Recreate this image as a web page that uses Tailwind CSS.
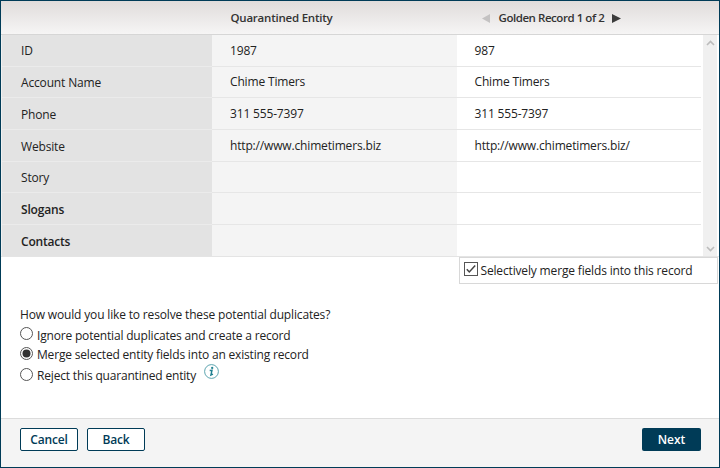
<!DOCTYPE html>
<html lang="en">
<head>
<meta charset="utf-8">
<title>Resolve duplicates</title>
<script src="https://cdn.jsdelivr.net/npm/@tailwindcss/browser@4"></script>
</head>
<body class="w-[720px] h-[468px] overflow-hidden bg-[#003b57] pt-px pl-px pr-px pb-px font-['Open_Sans',sans-serif] text-[12px] leading-4 tracking-[-0.16px] text-[#222]">
<div class="flex h-[466px] w-[718px] flex-col bg-white">
  <header class="flex h-[34px] shrink-0 border-b border-[#d6d6d6] bg-linear-to-b from-[#e0dcdb] to-[#f6f5f5] text-[11.5px] font-semibold tracking-[-0.22px] text-[#333]">
    <div class="ml-[229.5px] w-[250px] pt-[9px]">Quarantined Entity</div>
    <div class="flex pt-[9px]">
      <svg class="mt-1 mr-[9px] ml-px h-[9px] w-[8px]" viewBox="0 0 8 9"><path d="M8 0V9L0 4.5Z" fill="#c4c2c2"/></svg>
      <span class="w-[105px] whitespace-nowrap tracking-[-0.45px]">Golden Record 1 of 2</span>
      <svg class="mt-1 ml-[8px] h-[9px] w-[9px]" viewBox="0 0 9 9"><path d="M0 0V9L9 4.5Z" fill="#3c3c3c"/></svg>
    </div>
  </header>

  <section class="flex h-[222px] shrink-0 border-b border-[#e4e4e4]">
    <div class="grid w-[211px] grid-rows-[32px_31px_32px_32px_31px_32px_31px] border-l border-[#f1f1f1] bg-[#e3e3e3] *:border-b *:border-[#ebebeb] *:pl-[19px] *:last:border-b-0">
      <div class="pt-[8px]">ID</div><div class="pt-[8px]">Account Name</div><div class="pt-[9px]">Phone</div><div class="pt-[9px]">Website</div><div class="pt-[8px]">Story</div>
      <div class="pt-[9px] font-semibold tracking-[-0.16px]">Slogans</div><div class="pt-[9px] font-semibold tracking-[-0.2px]">Contacts</div>
    </div>
    <div class="grid w-[245px] grid-rows-[32px_31px_32px_32px_31px_32px_31px] bg-[#f4f4f4] *:border-b *:border-[#e6e6e6] *:pl-[18px] *:last:border-b-0">
      <div class="pt-[8px]">1987</div><div class="pt-[7px]">Chime Timers</div><div class="pt-[8px]">311 555-7397</div><div class="pt-[8px]">http://www.chimetimers.biz</div><div></div><div></div><div></div>
    </div>
    <div class="grid w-[244px] grid-rows-[32px_31px_32px_32px_31px_32px_31px] *:border-b *:border-[#e6e6e6] *:pl-[17.5px] *:last:border-b-0">
      <div class="pt-[8px]">987</div><div class="pt-[7px]">Chime Timers</div><div class="pt-[8px]">311 555-7397</div><div class="pt-[8px]">http://www.chimetimers.biz/</div><div></div><div></div><div></div>
    </div>
    <div class="ml-[2px] flex w-[14px] flex-col items-center justify-between bg-[#f0f0f0] pt-[5px] pb-[4px]">
      <svg class="h-[6px] w-[9px]" viewBox="0 0 9 6"><path d="M1 5L4.5 1.5L8 5" fill="none" stroke="#bcbcbc" stroke-width="1.6"/></svg>
      <svg class="h-[6px] w-[9px]" viewBox="0 0 9 6"><path d="M1 1L4.5 4.5L8 1" fill="none" stroke="#bcbcbc" stroke-width="1.6"/></svg>
    </div>
  </section>

  <label class="ml-[458px] flex h-[27px] w-[259px] shrink-0 border border-[#d8d8d8]">
    <svg class="mt-[4px] ml-[4px] h-[14px] w-[14px]" viewBox="0 0 14 14"><rect x=".5" y=".5" width="13" height="13" fill="#fff" stroke="#555"/><path d="M2.8 7.2L5.3 10L11.2 3.6" fill="none" stroke="#444" stroke-width="1.5"/></svg>
    <span class="mt-[5px] ml-[2.5px] whitespace-nowrap">Selectively merge fields into this record</span>
  </label>

  <section class="flex h-[134px] shrink-0 flex-col pt-[23px] pl-[19px]">
    <p class="h-[19px]">How would you like to resolve these potential duplicates?</p>
    <label class="flex h-[20px] gap-[3px]">
      <svg class="mt-px h-[13px] w-[13px]" viewBox="0 0 13 13"><circle cx="6.5" cy="6.5" r="6" fill="#fff" stroke="#555"/></svg>
      <span class="mt-[2px] ml-px tracking-[-0.18px]">Ignore potential duplicates and create a record</span>
    </label>
    <label class="flex h-[21px] gap-[3px]">
      <svg class="mt-px h-[13px] w-[13px]" viewBox="0 0 13 13"><circle cx="6.5" cy="6.5" r="6" fill="#fff" stroke="#555"/><circle cx="6.5" cy="6.5" r="4" fill="#333"/></svg>
      <span class="mt-px ml-px tracking-[-0.18px]">Merge selected entity fields into an existing record</span>
    </label>
    <label class="flex h-[21px] gap-[3px]">
      <svg class="mt-px h-[13px] w-[13px]" viewBox="0 0 13 13"><circle cx="6.5" cy="6.5" r="6" fill="#fff" stroke="#555"/></svg>
      <span class="mt-px ml-px w-[164px] whitespace-nowrap tracking-[-0.18px]">Reject this quarantined entity</span>
      <svg class="-mt-[3px] h-[15px] w-[15px]" viewBox="0 0 15 15"><circle cx="7.5" cy="7.5" r="6.9" fill="#fff" stroke="#4a9aa6" stroke-width=".9"/><circle cx="8.2" cy="3.9" r="1.15" fill="#1f8090"/><path d="M5.7 6.5L8 6.2L6.9 11L9 10.1" fill="none" stroke="#1f8090" stroke-width="1.4"/></svg>
    </label>
  </section>

  <footer class="flex grow border-t border-[#dcdcdc] bg-[#f4f4f4] pt-[9px] pl-[19px] text-[12px] font-semibold">
    <button class="h-[23px] w-[58px] rounded-[2px] border border-[#003b57] bg-white text-[#003b57]">Cancel</button>
    <button class="ml-[9px] h-[23px] w-[58px] rounded-[2px] border border-[#003b57] bg-white text-[#003b57]">Back</button>
    <button class="mr-[18px] ml-auto h-[23px] w-[59px] rounded-[2px] bg-[#003b57] text-white tracking-normal">Next</button>
  </footer>
</div>
</body>
</html>
